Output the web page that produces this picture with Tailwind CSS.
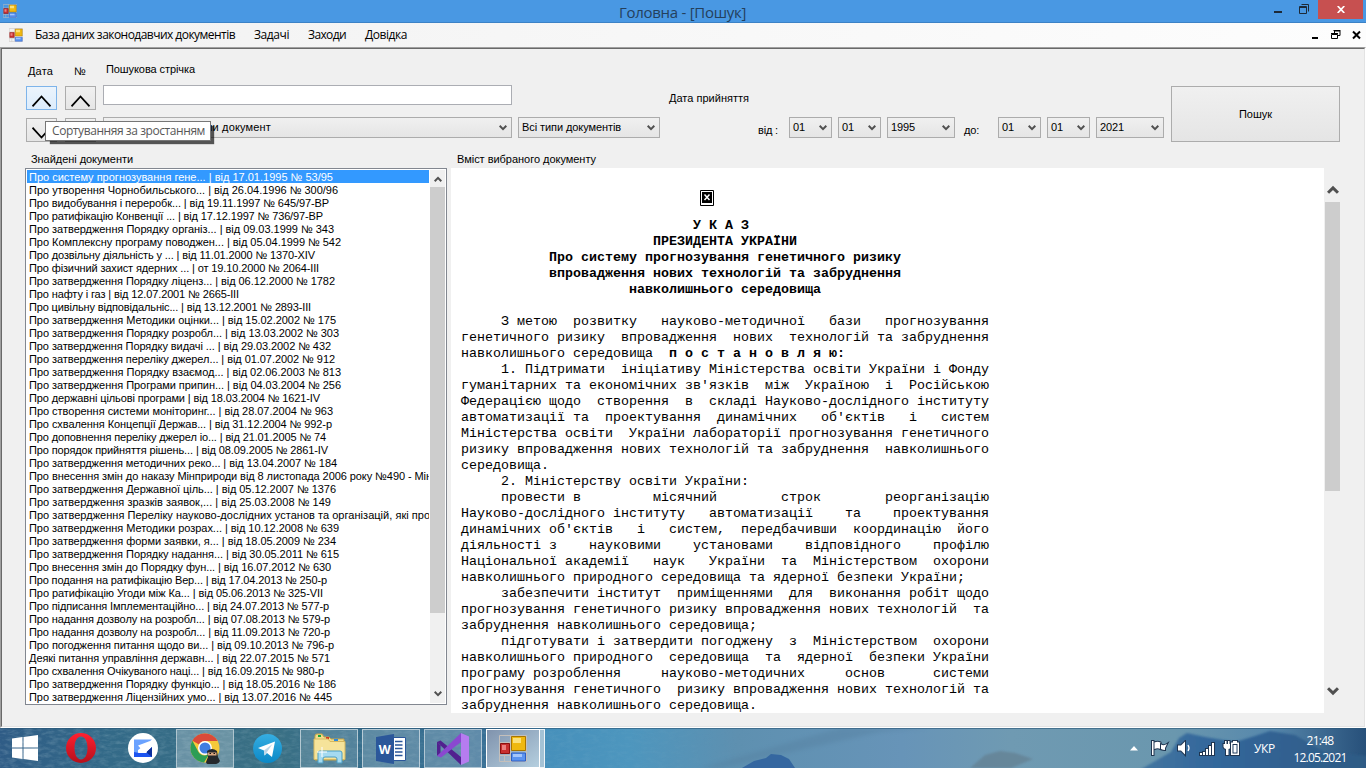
<!DOCTYPE html>
<html lang="uk">
<head>
<meta charset="utf-8">
<title>Головна - [Пошук]</title>
<script src="https://cdn.jsdelivr.net/npm/@tailwindcss/browser@4"></script>
</head>
<body class="w-[1366px] h-[768px] overflow-hidden bg-[#f0f0f0] font-['Liberation_Sans',sans-serif] text-[11px] leading-[13px] text-black">

<svg class="hidden" xmlns="http://www.w3.org/2000/svg">
  <symbol id="form" viewBox="0 0 28 27">
    <path d="M.5.5h27v26H.5zM.5 7.5H12M.5 20.500H27M5.500 20.500v6M11.500 0v26" fill="none" stroke="#c4bfbb"/>
    <path d="M1.500 8.500h9v10h-9z" fill="#c83030" stroke="#8d1010"/><path d="M3 10h4v5H3z" fill="#ec8080"/>
    <path d="M12.500 1.500h14v14h-14z" fill="#efb810" stroke="#a87600"/><path d="M14 3h8v5h-8z" fill="#fbe07a"/>
    <path d="M12.500 18h14v8h-14z" fill="#5b93f0" stroke="#2c5fc4"/><path d="M14 19h9v3h-9z" fill="#a5c6fb"/>
  </symbol>
  <symbol id="chev" viewBox="0 0 8 6"><path d="M.7.8 4 4.100 7.300.8" fill="none" stroke="#505050" stroke-width="2"/></symbol>
</svg>

<!-- title bar -->
<header class="h-[23px] bg-[#4998e3] border-b border-[#3c82c6] flex items-start relative">
  <svg class="w-[14px] h-[14px] mt-1 ml-[3px]"><use href="#form"/></svg>
  <div class="ml-[602px] mt-[2px] w-[127px] text-[15px] leading-[20px] font-['Open_Sans',sans-serif] text-[#24405c] whitespace-nowrap"><span data-w="127">Головна - [Пошук]</span></div>
  <div class="flex ml-auto mr-[3px]">
    <svg class="w-[45px] h-[22px]" viewBox="0 0 45 22"><path d="M1 11h8v2H1z" fill="#1d2a38"/><path d="M26.500 6.500h7v7h-7zM26 7.500h8M28.500 4.500h7v7" fill="none" stroke="#1d2a38"/></svg>
    <div class="w-[45px] h-[19px] bg-[#c75050] flex items-center justify-center"><svg class="w-[8px] h-[7px]" viewBox="0 0 8 7"><path d="m.7 0 6.600 7M7.300 0 .7 7" stroke="#fff" stroke-width="1.700"/></svg></div>
  </div>
</header>

<!-- menu bar -->
<nav class="h-[24px] bg-linear-to-r from-[#f2f2f2] to-[#fdfdfd] flex items-center font-['Open_Sans',sans-serif] text-[12px] leading-[16px] whitespace-nowrap">
  <svg class="w-[14px] h-[14px] ml-[9px]"><use href="#form"/></svg>
  <div class="ml-[12px] w-[200px]"><span data-w="200">База даних законодавчих документів</span></div>
  <div class="ml-[19px] w-[35px]"><span data-w="35">Задачі</span></div>
  <div class="ml-[19px] w-[38px]"><span data-w="38">Заходи</span></div>
  <div class="ml-[19px] w-[42px]"><span data-w="42">Довідка</span></div>
  <svg class="ml-auto mr-[5px] w-[50px] h-[14px]" viewBox="0 0 50 14"><path d="M1 9h6v2H1z"/><path d="M20.500 6.500h6v4h-6zM20 5.500h7M23 3h6v4.500h-2M22.500 2.500h7M23.500 2v4" fill="none" stroke="#000"/><path d="m42 3.500 7 7M49 3.500l-7 7" stroke="#000" stroke-width="2"/></svg>
</nav>

<main class="h-[681px] border-t border-l border-t-[#a0a0a0] border-l-[#a0a0a0] border-r border-b border-r-white border-b-white">
<div class="h-[679px] border-t border-l border-t-[#696969] border-l-[#696969] border-r border-b border-r-[#e3e3e3] border-b-[#e3e3e3]">

  <!-- search form -->
  <section class="flex items-start h-[103px] pl-[24px] whitespace-nowrap">
    <div class="w-[31px] pt-[16px] relative">
      <div class="h-[13px] pl-[2px]"><span data-w="25">Дата</span></div>
      <div class="mt-[8px] h-[24px] border border-[#7eb4ea] bg-linear-to-b from-[#ecf4fc] to-[#dcecfc] flex justify-center"><svg class="w-[19px] h-[12px] mt-[8px]" viewBox="0 0 19 12"><path d="M.5 11.300 9.500 1.500l9 9.800" fill="none" stroke="#000" stroke-width="1.800"/></svg></div>
      <div class="mt-[8px] h-[24px] border border-[#acacac] bg-linear-to-b from-[#f0f0f0] to-[#e5e5e5] flex justify-center"><svg class="w-[19px] h-[12px] mt-[8px]" viewBox="0 0 19 12"><path d="M.5.7 9.500 10.500l9-9.800" fill="none" stroke="#000" stroke-width="1.800"/></svg></div>
      <!-- tooltip -->
      <div class="absolute left-[19px] top-[72px] z-10 w-[166px] h-[20px] border border-[#767676] bg-white shadow-[4px_4px_1px_-1px_rgba(0,0,0,0.65)] pl-[6px] font-['Open_Sans',sans-serif] text-[12px] leading-[18px] text-[#575757]"><span data-w="153">Сортуванняя за зростанням</span></div>
    </div>
    <div class="w-[31px] ml-[8px] pt-[16px]">
      <div class="h-[13px] pl-[9px]"><span data-w="11">№</span></div>
      <div class="mt-[8px] h-[24px] border border-[#acacac] bg-linear-to-b from-[#f0f0f0] to-[#e5e5e5] flex justify-center"><svg class="w-[19px] h-[12px] mt-[8px]" viewBox="0 0 19 12"><path d="M.5 11.300 9.500 1.500l9 9.800" fill="none" stroke="#000" stroke-width="1.800"/></svg></div>
      <div class="mt-[8px] h-[24px] border border-[#acacac] bg-linear-to-b from-[#f0f0f0] to-[#e5e5e5]"></div>
    </div>
    <div class="w-[409px] ml-[7px] pt-[14px]">
      <div class="h-[13px] pl-[3px]"><span data-w="89">Пошукова стрічка</span></div>
      <div class="mt-[9px] h-[20px] border border-[#abadb3] bg-white"></div>
      <div class="mt-[12px] h-[21px] border border-[#acacac] bg-linear-to-b from-[#f0f0f0] to-[#e5e5e5] flex items-center justify-between pl-[102px] pr-[4px]"><span data-w="65">ли документ</span><svg class="w-[8px] h-[6px]"><use href="#chev"/></svg></div>
    </div>
    <div class="w-[142px] ml-[6px] mt-[68px] h-[21px] border border-[#acacac] bg-linear-to-b from-[#f0f0f0] to-[#e5e5e5] flex items-center justify-between pl-[3px] pr-[4px]"><span data-w="99">Всі типи документів</span><svg class="w-[8px] h-[6px]"><use href="#chev"/></svg></div>
    <div class="ml-[9px] w-[495px] pt-[43px]">
      <div class="h-[13px]"><span data-w="80">Дата прийняття</span></div>
      <div class="flex mt-[12px] pl-[89px]">
        <div class="w-[31px] pt-[7px]"><span data-w="20">від :</span></div>
        <div class="w-[43px] h-[21px] border border-[#acacac] bg-linear-to-b from-[#f0f0f0] to-[#e5e5e5] flex items-center justify-between pl-[3px] pr-[4px]"><span data-w="12">01</span><svg class="w-[8px] h-[6px]"><use href="#chev"/></svg></div>
        <div class="ml-[6px] w-[43px] h-[21px] border border-[#acacac] bg-linear-to-b from-[#f0f0f0] to-[#e5e5e5] flex items-center justify-between pl-[3px] pr-[4px]"><span data-w="12">01</span><svg class="w-[8px] h-[6px]"><use href="#chev"/></svg></div>
        <div class="ml-[6px] w-[68px] h-[21px] border border-[#acacac] bg-linear-to-b from-[#f0f0f0] to-[#e5e5e5] flex items-center justify-between pl-[3px] pr-[4px]"><span data-w="24">1995</span><svg class="w-[8px] h-[6px]"><use href="#chev"/></svg></div>
        <div class="ml-[9px] w-[34px] pt-[7px]"><span data-w="15">до:</span></div>
        <div class="w-[43px] h-[21px] border border-[#acacac] bg-linear-to-b from-[#f0f0f0] to-[#e5e5e5] flex items-center justify-between pl-[3px] pr-[4px]"><span data-w="12">01</span><svg class="w-[8px] h-[6px]"><use href="#chev"/></svg></div>
        <div class="ml-[6px] w-[43px] h-[21px] border border-[#acacac] bg-linear-to-b from-[#f0f0f0] to-[#e5e5e5] flex items-center justify-between pl-[3px] pr-[4px]"><span data-w="12">01</span><svg class="w-[8px] h-[6px]"><use href="#chev"/></svg></div>
        <div class="ml-[6px] w-[68px] h-[21px] border border-[#acacac] bg-linear-to-b from-[#f0f0f0] to-[#e5e5e5] flex items-center justify-between pl-[3px] pr-[4px]"><span data-w="24">2021</span><svg class="w-[8px] h-[6px]"><use href="#chev"/></svg></div>
      </div>
    </div>
    <div class="ml-[7px] mt-[37px] w-[169px] h-[56px] border border-[#acacac] bg-linear-to-b from-[#f0f0f0] to-[#e5e5e5] flex items-center justify-center"><span data-w="33">Пошук</span></div>
  </section>

  <div class="flex h-[16px] pl-[29px] pt-px whitespace-nowrap">
    <div class="w-[426px]"><span data-w="102">Знайдені документи</span></div>
    <div><span data-w="139">Вміст вибраного документу</span></div>
  </div>

  <section class="flex pl-[23px] items-start">
    <!-- found documents -->
    <div class="w-[422px] h-[537px] border border-[#828790] bg-white flex p-px">
      <div id="list" class="w-[402px] overflow-hidden whitespace-nowrap"></div>
      <div class="ml-px w-[15px] bg-[#f0f0f0] flex flex-col items-center">
        <div class="h-[17px] pt-[6px]"><svg class="w-[8px] h-[6px] rotate-180"><use href="#chev"/></svg></div>
        <div class="w-[15px] h-[426px] bg-[#cdcdcd]"></div>
        <svg class="w-[8px] h-[6px] mt-auto mb-[6px]"><use href="#chev"/></svg>
      </div>
    </div>
    <!-- document text -->
    <div class="ml-[4px] w-[873px] h-[545px] bg-white pl-[10px] overflow-hidden">
      <svg class="mt-[22px] ml-[239px] w-[14px] h-[16px]" viewBox="0 0 14 16"><path d="M.5.5h13v15H.5z" fill="#fff" stroke="#000"/><path d="M2 2h10v11H2z"/><path d="m4.500 4.500 5 5.500M9.500 4.500l-5 5.500" stroke="#fff" stroke-width="1.500"/></svg>
<pre class="mt-[12px] font-['Liberation_Mono',monospace] text-[13.333px] leading-[16px]"><b>                             У К А З
                        ПРЕЗИДЕНТА УКРАЇНИ
           Про систему прогнозування генетичного ризику
           впровадження нових технологій та забруднення
                     навколишнього середовища</b>

     З метою  розвитку   науково-методичної   бази   прогнозування
генетичного ризику  впровадження  нових  технологій та забруднення
навколишнього середовища  <b>п о с т а н о в л я ю:</b>
     1. Підтримати  ініціативу Міністерства освіти України і Фонду
гуманітарних та економічних зв'язків  між  Україною  і  Російською
Федерацією щодо  створення  в  складі Науково-дослідного інституту
автоматизації та  проектування  динамічних   об'єктів   і   систем
Міністерства освіти  України лабораторії прогнозування генетичного
ризику впровадження нових технологій та забруднення  навколишнього
середовища.
     2. Міністерству освіти України:
     провести в         місячний        строк        реорганізацію
Науково-дослідного інституту   автоматизації    та    проектування
динамічних об'єктів   і   систем,  передбачивши  координацію  його
діяльності з    науковими    установами    відповідного    профілю
Національної академії   наук   України  та  Міністерством  охорони
навколишнього природного середовища та ядерної безпеки України;
     забезпечити інститут  приміщеннями  для  виконання робіт щодо
прогнозування генетичного ризику впровадження нових технологій  та
забруднення навколишнього середовища;
     підготувати і затвердити погоджену  з  Міністерством  охорони
навколишнього природного  середовища  та  ядерної  безпеки України
програму розроблення     науково-методичних     основ      системи
прогнозування генетичного  ризику впровадження нових технологій та
забруднення навколишнього середовища.</pre>
    </div>
    <div class="w-[17px] h-[545px] flex flex-col items-center">
      <svg class="w-[12px] h-[9px] mt-[17px] rotate-180" viewBox="0 0 8 6"><use href="#chev"/></svg>
      <div class="mt-[8px] w-[15px] h-[289px] bg-[#cdcdcd]"></div>
      <svg class="w-[12px] h-[9px] mt-auto mb-[17px]" viewBox="0 0 8 6"><use href="#chev"/></svg>
    </div>
  </section>
</div>
</main>

<!-- taskbar -->
<footer class="h-[40px] relative overflow-hidden">
  <svg class="absolute inset-0 w-[1366px] h-[40px]" viewBox="0 0 1366 40" preserveAspectRatio="none">
    <defs>
      <linearGradient id="sea"><stop offset="0" stop-color="#2f5c86"/><stop offset=".08" stop-color="#336a88"/><stop offset=".2" stop-color="#3a7084"/><stop offset=".27" stop-color="#356d8c"/><stop offset=".38" stop-color="#3a7098"/><stop offset=".4" stop-color="#4690bb"/><stop offset=".46" stop-color="#4d96be"/><stop offset=".54" stop-color="#5e90b0"/><stop offset=".66" stop-color="#6794b8"/><stop offset=".74" stop-color="#6f9ab2"/><stop offset=".86" stop-color="#6a97ae"/><stop offset=".93" stop-color="#5788ac"/><stop offset="1" stop-color="#27507a"/></linearGradient>
      <linearGradient id="hill"><stop offset="0" stop-color="#4577a0"/><stop offset=".3" stop-color="#34689c"/><stop offset="1" stop-color="#2d5a84"/></linearGradient>
      <linearGradient id="fade"><stop offset="0" stop-color="#fff"/><stop offset=".6" stop-color="#fff" stop-opacity=".5"/><stop offset="1" stop-color="#fff" stop-opacity="0"/></linearGradient>
      <mask id="fm"><path d="M0 0h760v40H0z" fill="url(#fade)"/></mask>
      <filter id="soft"><feGaussianBlur stdDeviation="2"/></filter>
      <filter id="soft1"><feGaussianBlur stdDeviation=".8"/></filter>
      <filter id="grain" x="0" y="0" width="100%" height="100%"><feTurbulence type="fractalNoise" baseFrequency=".12 .3" numOctaves="3" seed="4"/><feColorMatrix values="0 0 0 0 .6  0 0 0 0 .75  0 0 0 0 .8  .9 0 0 0 -.35"/></filter>
    </defs>
    <path d="M0 0h1366v40H0z" fill="url(#sea)"/>
    <g mask="url(#fm)"><path d="M0 0h760v40H0z" filter="url(#grain)" opacity=".5"/></g>
    <path d="M720 40 880 4l50-4h-90L700 40z" fill="#557f9f" opacity=".4" filter="url(#soft)"/>
    <path d="m970 40 15-13 15-4 15 2 18 6-22 9z" fill="#647f90" opacity=".7" filter="url(#soft1)"/>
    <path d="m742 40 12-7 12-3 5-4 10 1 8 4 6 9z" fill="#3567a0"/>
    <path d="m1136 44 35-20 8-14 8-5 18 4 30 5 20-6 15-5 25 4 30 17 45 4v16z" fill="url(#hill)" filter="url(#soft1)"/>
    <path d="M0 .5h1366" stroke="#2c5878" opacity=".6"/>
  </svg>
  <div class="relative flex items-start h-[40px] pt-px text-white">
    <div class="w-[50px] pl-[12px] pt-[6px]"><svg class="w-[26px] h-[26px]" viewBox="0 0 26 26" fill="#fff"><path d="m0 3.500 10.500-1.500v10.500H0zM11.500 1.900 26 0v12.500H11.500zM0 13.500h10.500V24L0 22.500zM11.500 13.500H26V26l-14.500-2z"/></svg></div>
    <div class="w-[62px] h-[38px] flex items-center justify-center"><svg class="w-[30px] h-[30px]" viewBox="0 0 30 30"><defs><linearGradient id="op" x2="0" y2="1"><stop stop-color="#ff2030"/><stop offset="1" stop-color="#b5101c"/></linearGradient></defs><path fill-rule="evenodd" d="M15 0a15 15 0 1 0 0 30 15 15 0 0 0 0-30zm0 3.500c4 0 6.500 5 6.500 11.500S19 26.500 15 26.500 8.500 21.500 8.500 15 11 3.500 15 3.500z" fill="url(#op)"/></svg></div>
    <div class="w-[62px] h-[38px] flex items-center justify-center"><svg class="w-[30px] h-[30px]" viewBox="0 0 30 30"><circle cx="15" cy="15" r="15" fill="#fff"/><path d="M6 6.500h18L10 17v7H6z" fill="#6aa2ff"/><path d="M6 24v-5l5 1 8 0 5-6v10z" fill="#1c54f0"/><path d="m24 14-6 5 6 5z" fill="#0b2f9c"/><path d="M10 12.500 22 8l-3.500 4.500 5.500.5-6 6.500-8-.500 3-3z" fill="#fff"/></svg></div>
    <div class="ml-[2px] w-[58px] h-[39px] border border-white/45 bg-white/25 flex items-center justify-center"><svg class="w-[31px] h-[31px]" viewBox="0 0 31 31"><circle cx="15" cy="15" r="14.500" fill="#f5c93a"/><path d="M2.400 7.700A14.500 14.500 0 0 1 27.600 8H15a7 7 0 0 0-6 3.500z" fill="#d94a3a"/><path d="M2.400 7.700A14.500 14.500 0 0 0 14 29.500l6.500-10.500a7 7 0 0 1-12 0z" fill="#2d9d55"/><circle cx="15" cy="15" r="7" fill="#fff"/><circle cx="15" cy="15" r="5.500" fill="#3f7de0"/><path d="M17 18q5-4 10 0l1 6 2 4q-2 4-8 3-6 1-6-2l2-5z" fill="#25282c"/><path d="M18 19.500h8.500v3H18z" fill="#d9a47d"/><path d="M19.500 20.500h1.500M23.500 20.500H25" stroke="#111"/></svg></div>
    <div class="w-[66px] h-[38px] flex items-center justify-center"><svg class="w-[29px] h-[29px]" viewBox="0 0 29 29"><defs><linearGradient id="tg" x2="0" y2="1"><stop stop-color="#36aee2"/><stop offset="1" stop-color="#0b88c6"/></linearGradient></defs><circle cx="14.500" cy="14.500" r="14.500" fill="url(#tg)"/><path d="m5 14 17-6.500-3 15.500-5-4-2.500 2.500-.5-5z" fill="#fff"/><path d="m11 16.500 8.500-6.500-5.500 8-2.500 3.500z" fill="#bcd7e8"/></svg></div>
    <div class="w-[58px] h-[39px] border border-white/55 bg-white/15 flex items-center justify-center"><svg class="w-[33px] h-[31px]" viewBox="0 0 33 31"><path d="M2 3q0-2 2-2h5l2 3h5l2 2h13v21H2z" fill="#f2dc8b" stroke="#c7a548"/><path d="M5 2h3v2H5z" fill="#19a83a"/><path d="M13 4h3v2h-3z" fill="#d23b21"/><path d="M21 6h4v2h-4z" fill="#2b8ae0"/><path d="M1 6h14l2 2.500h15v18H1z" fill="#f6e39a" stroke="#d5b75e"/><path d="M5 30V20q0-2 2-2h20q2 0 2 2v10h-5v-4q0-2-2-2H12q-2 0-2 2v4z" fill="#a5daf0" stroke="#4b9ec4"/><path d="M9 14v10M4 19h10" stroke="#fff"/></svg></div>
    <div class="ml-[4px] w-[58px] h-[39px] border border-white/55 bg-white/20 flex items-center justify-center"><svg class="w-[30px] h-[30px]" viewBox="0 0 30 30"><path d="M17 3.500h12.500v23H17z" fill="#fff" stroke="#2b579a"/><path d="M19 7.500h7.500M19 11h7.500M19 14.500h7.500M19 18h7.500M19 21.500h7.500" stroke="#2b579a" stroke-width="1.500"/><path d="M0 3 18 0v30L0 27z" fill="#2b579a"/><text x="2.800" y="19.500" textLength="12" lengthAdjust="spacingAndGlyphs" font-family="Open Sans, sans-serif" font-weight="700" font-size="13" fill="#fff">W</text></svg></div>
    <div class="ml-[4px] w-[58px] h-[39px] border border-white/50 bg-white/20 flex items-center justify-center"><svg class="w-[32px] h-[32px]" viewBox="0 0 32 32"><path d="M0 9 3.500 7.500 24 24v8L0 9zM0 9v14l3.500-3V12z" fill="#52218f"/><path d="M0 23 24 0v9L4 24.500z" fill="#8a48d0"/><path d="M24 0l8 3.500v25L24 32z" fill="#b67cf0"/></svg></div>
    <div class="ml-[4px] w-[54px] h-[39px] border border-white bg-linear-to-br from-[#8093ad] to-[#b5cfdf] flex items-center justify-center"><svg class="w-[28px] h-[27px]"><use href="#form"/></svg></div>
    <div class="w-[5px] h-[39px] border border-l-0 border-white/80 bg-[#a4c2d5]"></div>
    <div class="ml-auto flex items-center h-[39px] font-['Open_Sans',sans-serif] text-[12px] leading-[17px] whitespace-nowrap">
      <svg class="w-[8px] h-[5px] mr-[13px]" viewBox="0 0 8 5"><path d="M0 4.500h8L4 0z" fill="#fff"/></svg>
      <svg class="w-[90px] h-[17px] mr-[13px]" viewBox="0 0 90 17">
        <g stroke="#1f3550" stroke-width="2" paint-order="stroke" fill="#fff"><path d="M1 1h1.500v14H1zM3.500 2.500q3-1.500 6 0V9q-3-1.500-6 0z"/><path d="M10 4.500q3 1.500 6-.5l-2 4v2q-2 0-4-1z"/>
        <path d="M27 5.500h3l4-4v13l-4-4h-3z"/><path d="M49 13h2v2h-2zM52 12h2v3h-2zM55 9h2v6h-2zM58 6h2v9h-2zM61 3h2v12h-2z"/>
        <path d="M74 1h1.500v3H77V1h1.500v3H80v3q-1 2-2.500 2v6H75V9q-1.500 0-2.500-2V4H74z"/>
        <path fill-rule="evenodd" d="M80 2.500h2V1h4v1.500h2V15h-8zM81.500 4v9.500h5V4z"/></g>
        <path d="M37 5q2 3 0 6" fill="none" stroke="#fff" stroke-width="1.300"/>
        <path d="M82.500 5h3v7.500h-3z" fill="#fff"/>
      </svg>
      <span class="w-[21px]"><span data-w="21">УКР</span></span>
      <div class="ml-[18px] mr-[19px] w-[54px] text-center"><div><span data-w="27">21:48</span></div><div><span data-w="53">12.05.2021</span></div></div>
    </div>
  </div>
</footer>

<script>
// rows of the result list: text, width in pixels
const rows = [
["Про систему прогнозування гене... | від 17.01.1995 № 53/95",304],
["Про утворення Чорнобильського... | від 26.04.1996 № 300/96",309],
["Про видобування і переробк... | від 19.11.1997 № 645/97-ВР",300],
["Про ратифікацію Конвенції ... | від 17.12.1997 № 736/97-ВР",294],
["Про затвердження Порядку організ... | від 09.03.1999 № 343",305],
["Про Комплексну програму поводжен... | від 05.04.1999 № 542",312],
["Про дозвільну діяльність у ... | від 11.01.2000 № 1370-XIV",286],
["Про фізичний захист ядерних ... | от 19.10.2000 № 2064-III",290],
["Про затвердження Порядку ліценз... | від 06.12.2000 № 1782",306],
["Про нафту і газ | від 12.07.2001 № 2665-III",210],
["Про цивільну відповідальніс... | від 13.12.2001 № 2893-III",282],
["Про затвердження Методики оцінки... | від 15.02.2002 № 175",307],
["Про затвердження Порядку розробл... | від 13.03.2002 № 303",310],
["Про затвердження Порядку видачі ... | від 29.03.2002 № 432",302],
["Про затвердження переліку джерел... | від 01.07.2002 № 912",306],
["Про затвердження Порядку взаємод... | від 02.06.2003 № 813",312],
["Про затвердження Програми припин... | від 04.03.2004 № 256",312],
["Про державні цільові програми | від 18.03.2004 № 1621-IV",291],
["Про створення системи моніторинг... | від 28.07.2004 № 963",304],
["Про схвалення Концепції Держав... | від 31.12.2004 № 992-р",303],
["Про доповнення переліку джерел іо... | від 21.01.2005 № 74",297],
["Про порядок прийняття рішень... | від 08.09.2005 № 2861-IV",299],
["Про затвердження методичних реко... | від 13.04.2007 № 184",308],
["Про внесення змін до наказу Мінприроди від 8 листопада 2006 року №490 - Мін",403],
["Про затвердження Державної ціль... | від 05.12.2007 № 1376",307],
["Про затвердження зразків заявок,... | від 25.03.2008 № 149",302],
["Про затвердження Переліку науково-дослідних установ та організацій, які пров",407],
["Про затвердження Методики розрах... | від 10.12.2008 № 639",310],
["Про затвердження форми заявки, я... | від 18.05.2009 № 234",307],
["Про затвердження Порядку надання... | від 30.05.2011 № 615",310],
["Про внесення змін до Порядку фун... | від 16.07.2012 № 630",302],
["Про подання на ратифікацію Вер... | від 17.04.2013 № 250-р",298],
["Про ратифікацію Угоди між Ка... | від 05.06.2013 № 325-VII",294],
["Про підписання Імплементаційно... | від 24.07.2013 № 577-р",300],
["Про надання дозволу на розробл... | від 07.08.2013 № 579-р",301],
["Про надання дозволу на розробл... | від 11.09.2013 № 720-р",301],
["Про погодження питання щодо ви... | від 09.10.2013 № 796-р",305],
["Деякі питання управління державн... | від 22.07.2015 № 571",301],
["Про схвалення Очікуваного наці... | від 16.09.2015 № 980-р",295],
["Про затвердження Порядку функціо... | від 18.05.2016 № 186",307],
["Про затвердження Ліцензійних умо... | від 13.07.2016 № 445",303]];
const list = document.getElementById('list');
rows.forEach(([t, w], i) => {
  const d = document.createElement('div');
  d.className = 'h-[13px] leading-[14px] pl-[2px]' + (i ? '' : ' bg-[#3399ff] text-white');
  const s = document.createElement('span');
  s.dataset.w = w; s.textContent = t;
  d.append(s); list.append(d);
});
// tune tracking so each label takes its design width
function fit() {
  const all = [...document.querySelectorAll('[data-w]')];
  all.forEach(s => { s.style.letterSpacing = '0px'; });
  const widths = all.map(s => s.getBoundingClientRect().width);
  all.forEach((s, i) => { s.style.letterSpacing = (s.dataset.w - widths[i]) / s.textContent.length + 'px'; });
}
fit();
addEventListener('load', () => {
  fit();
  requestAnimationFrame(() => requestAnimationFrame(fit));
  document.fonts.ready.then(fit);
  setTimeout(fit, 100);
});
</script>
</body>
</html>
